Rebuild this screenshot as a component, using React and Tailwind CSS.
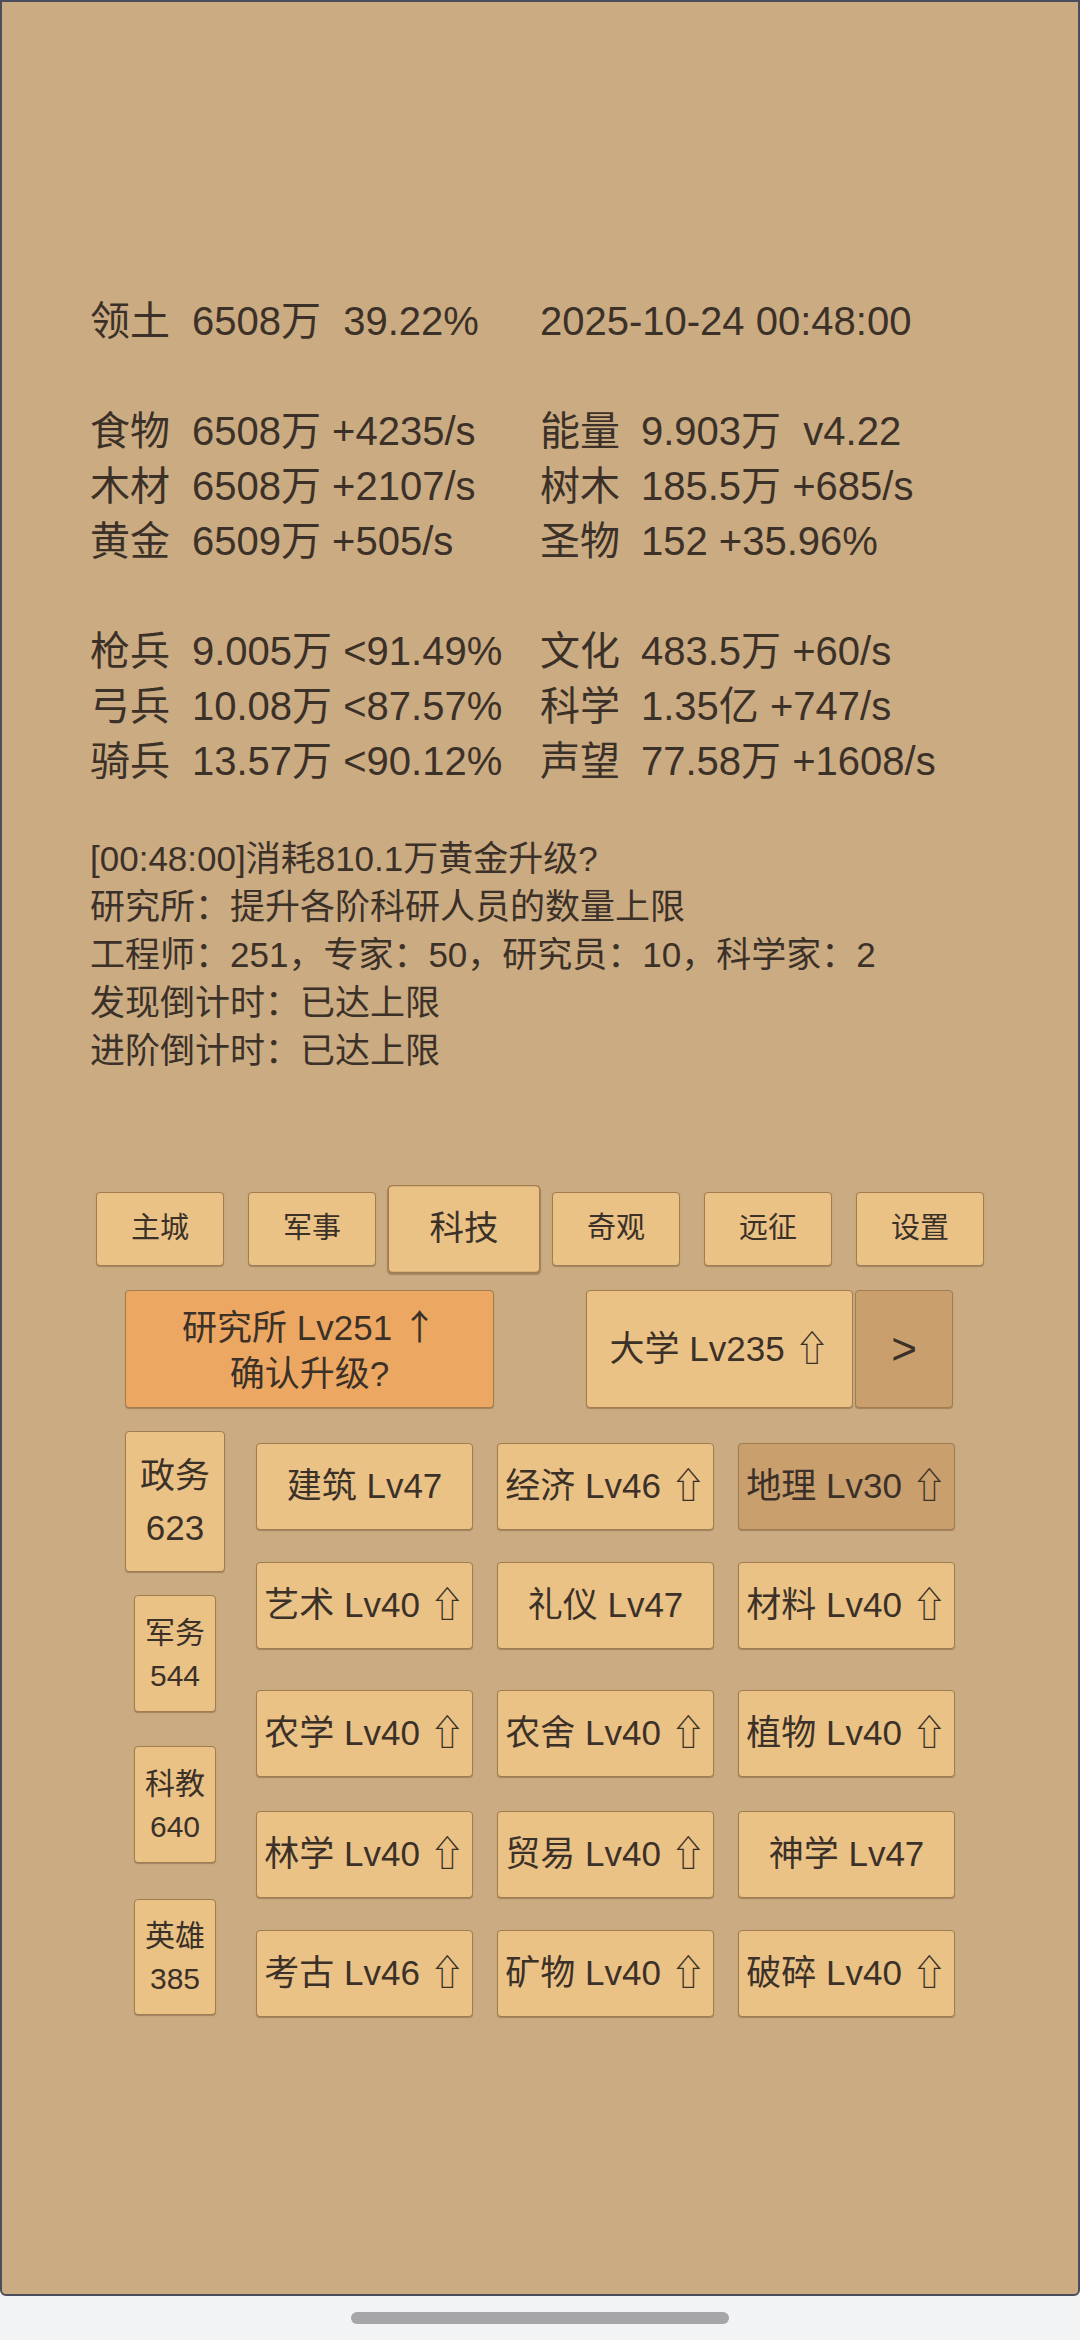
const stats = [
  [
    ['领土', '6508万  39.22%', '', '2025-10-24 00:48:00'],
  ],
  [
    ['食物', '6508万 +4235/s', '能量', '9.903万  v4.22'],
    ['木材', '6508万 +2107/s', '树木', '185.5万 +685/s'],
    ['黄金', '6509万 +505/s', '圣物', '152 +35.96%'],
  ],
  [
    ['枪兵', '9.005万 <91.49%', '文化', '483.5万 +60/s'],
    ['弓兵', '10.08万 <87.57%', '科学', '1.35亿 +747/s'],
    ['骑兵', '13.57万 <90.12%', '声望', '77.58万 +1608/s'],
  ],
];

const messages = [
  '[00:48:00]消耗810.1万黄金升级?',
  '研究所：提升各阶科研人员的数量上限',
  '工程师：251，专家：50，研究员：10，科学家：2',
  '发现倒计时：已达上限',
  '进阶倒计时：已达上限',
];

const tabs = ['主城', '军事', '科技', '奇观', '远征', '设置'];

const sides = [
  { name: '政务', num: '623', cls: 'w-[100px] h-[141px] text-[35px] leading-[52px]', mt: '' },
  { name: '军务', num: '544', cls: 'w-[82px] h-[117px] text-[30px] leading-[43px]', mt: 'mt-[23px]' },
  { name: '科教', num: '640', cls: 'w-[82px] h-[117px] text-[30px] leading-[43px]', mt: 'mt-[34px]' },
  { name: '英雄', num: '385', cls: 'w-[82px] h-[116px] text-[30px] leading-[43px]', mt: 'mt-[36px]' },
];

const techRows = [
  { mt: '', items: [['建筑 Lv47', false], ['经济 Lv46 ⇧', false], ['地理 Lv30 ⇧', true]] },
  { mt: 'mt-[32px]', items: [['艺术 Lv40 ⇧', false], ['礼仪 Lv47', false], ['材料 Lv40 ⇧', false]] },
  { mt: 'mt-[41px]', items: [['农学 Lv40 ⇧', false], ['农舍 Lv40 ⇧', false], ['植物 Lv40 ⇧', false]] },
  { mt: 'mt-[34px]', items: [['林学 Lv40 ⇧', false], ['贸易 Lv40 ⇧', false], ['神学 Lv47', false]] },
  { mt: 'mt-[32px]', items: [['考古 Lv46 ⇧', false], ['矿物 Lv40 ⇧', false], ['破碎 Lv40 ⇧', false]] },
];

const btn = 'border border-[#a07c4f] rounded-[4px] shadow-[0_1px_1px_rgba(60,40,20,0.3)] flex items-center justify-center';

function StatRow({ row }) {
  const [l1, v1, l2, v2] = row;
  return (
    <div className="flex h-[55px] items-center whitespace-pre">
      <div className="flex w-[450px] gap-[22px]">
        <span className="w-[80px]">{l1}</span>
        <span>{v1}</span>
      </div>
      <div className="flex gap-[21px]">
        {l2 ? <span className="w-[80px]">{l2}</span> : null}
        <span>{v2}</span>
      </div>
    </div>
  );
}

export default function App() {
  return (
    <div className="w-[1080px] h-[2340px] bg-[#f2f3f5] flex flex-col font-['Liberation_Sans','Noto_Sans_CJK_SC','DejaVu_Sans',sans-serif] text-[#3b3128]">
      <div className="h-[2296px] bg-[#cbab82] border-2 border-[#4b4d5e] rounded-b-[6px] flex flex-col">
        {/* stats */}
        <div className="pt-[292px] pl-[88px] text-[40px] leading-[55px]">
          {stats.map((group, gi) => (
            <div key={gi} className={gi > 0 ? 'mt-[55px]' : ''}>
              {group.map((row, ri) => (
                <StatRow key={ri} row={row} />
              ))}
            </div>
          ))}
        </div>

        {/* log */}
        <div className="mt-[46px] pl-[88px] text-[35px] leading-[48px]">
          {messages.map((m) => (
            <div key={m}>{m}</div>
          ))}
        </div>

        {/* tabs */}
        <div className="mt-[117px] flex justify-center gap-[24px]">
          {tabs.map((t) => (
            <div
              key={t}
              className={`${btn} w-[128px] h-[74px] bg-[#ebc286] text-[29px] ${t === '科技' ? 'scale-[1.19]' : ''}`}
            >
              {t}
            </div>
          ))}
        </div>

        {/* building row */}
        <div className="mt-[24px] flex pl-[123px]">
          <div className={`${btn} w-[369px] h-[118px] bg-[#eca862] text-[35px] leading-[46px] flex-col text-center`}>
            <div>
              研究所 Lv251 <span className="font-['Noto_Sans_CJK_SC',sans-serif]">↑</span>
            </div>
            <div>确认升级?</div>
          </div>
          <div className={`${btn} ml-[92px] w-[267px] h-[118px] bg-[#ebc286] text-[35px]`}>大学 Lv235 ⇧</div>
          <div className={`${btn} ml-[2px] w-[98px] h-[118px] bg-[#c99f6d] text-[44px]`}>&gt;</div>
        </div>

        {/* tech area */}
        <div className="mt-[23px] flex pl-[123px]">
          <div className="w-[100px] flex flex-col items-center">
            {sides.map((s) => (
              <div key={s.name} className={`${btn} ${s.cls} ${s.mt} bg-[#ebc286] flex-col`}>
                <div>{s.name}</div>
                <div>{s.num}</div>
              </div>
            ))}
          </div>
          <div className="ml-[31px] pt-[12px] flex flex-col">
            {techRows.map((r, ri) => (
              <div key={ri} className={`flex gap-[24px] ${r.mt}`}>
                {r.items.map(([label, dark]) => (
                  <div
                    key={label}
                    className={`${btn} w-[217px] h-[87px] text-[35px] whitespace-nowrap ${dark ? 'bg-[#c99f6d]' : 'bg-[#ebc286]'}`}
                  >
                    {label}
                  </div>
                ))}
              </div>
            ))}
          </div>
        </div>
      </div>

      {/* home indicator */}
      <div className="flex-1 flex items-center justify-center">
        <div className="w-[378px] h-[12px] rounded-full bg-[#a6a6a8]"></div>
      </div>
    </div>
  );
}
